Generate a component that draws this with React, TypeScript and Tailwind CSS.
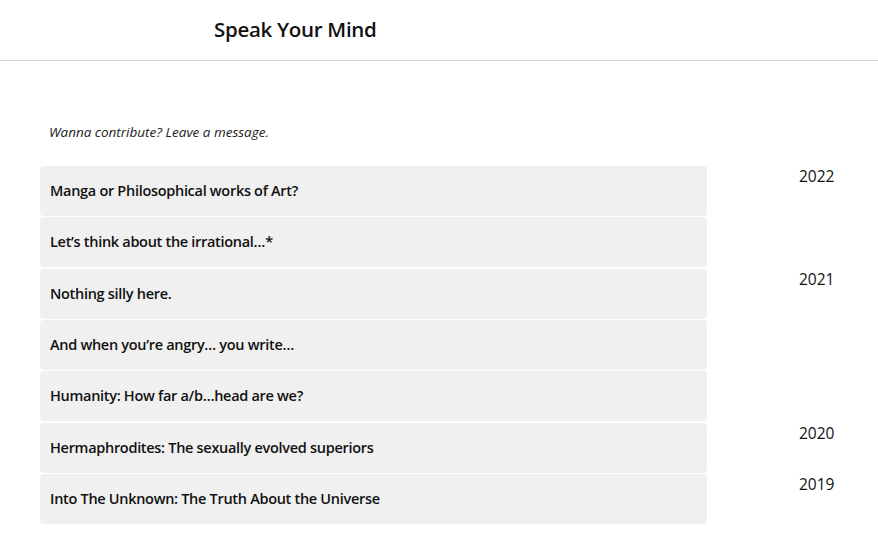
import React from "react";

const groups: { year: string; items: string[] }[] = [
  { year: "2022", items: ["Manga or Philosophical works of Art?", "Let’s think about the irrational…*"] },
  { year: "2021", items: ["Nothing silly here.", "And when you’re angry… you write…", "Humanity: How far a/b…head are we?"] },
  { year: "2020", items: ["Hermaphrodites: The sexually evolved superiors"] },
  { year: "2019", items: ["Into The Unknown: The Truth About the Universe"] },
];

export default function App() {
  return (
    <div className="min-h-[533px] w-[878px] bg-white text-[#111]" style={{ fontFamily: '"Open Sans", "Noto Sans", sans-serif' }}>
      <header className="h-[61px] border-b border-[#d4d4d4] flex items-center pl-[214px]">
        <h1 className="-mt-[2px] text-[20.5px] font-semibold tracking-[-0.3px] text-[#111]">Speak Your Mind</h1>
      </header>
      <div className="pt-[62px] pl-[40px]">
        <p className="pl-[9px] text-[13.5px] italic text-[#222] leading-[18px]">Wanna contribute? Leave a message.</p>
        <div className="mt-[25px] flex flex-col gap-[1.33px]">
          {groups.map((g) => (
            <div key={g.year} className="flex">
              <div className="w-[667px] flex flex-col gap-[1.33px]">
                {g.items.map((t) => (
                  <div key={t} className="h-[50px] rounded-[4px] bg-[#f0f0f0] flex items-center pl-[10px] text-[14.5px] font-semibold tracking-[-0.3px]">
                    {t}
                  </div>
                ))}
              </div>
              <div className="flex-1 pl-[92px] text-[15.5px] leading-[20px]">{g.year}</div>
            </div>
          ))}
        </div>
      </div>
    </div>
  );
}
